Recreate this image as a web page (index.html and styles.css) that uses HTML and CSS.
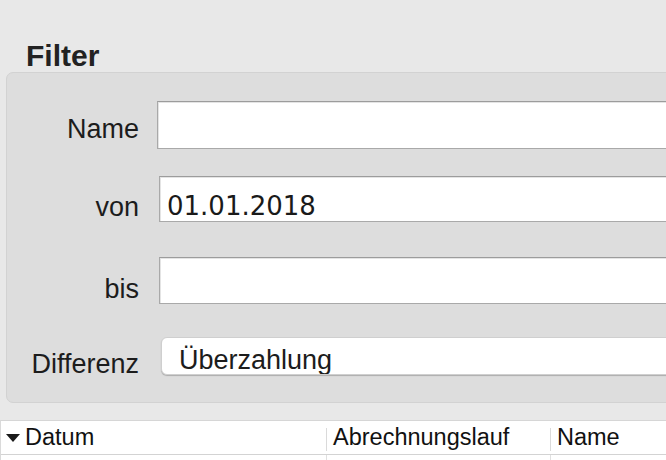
FILE: index.html
```html
<!DOCTYPE html>
<html lang="de">
<head>
<meta charset="utf-8">
<title>Filter</title>
<link rel="stylesheet" href="styles.css">
</head>
<body>
<div class="page">
  <h1 class="title">Filter</h1>
  <section class="group">
    <div class="row row-name">
      <label class="label">Name</label>
      <div class="field"></div>
    </div>
    <div class="row row-von">
      <label class="label">von</label>
      <div class="field field-date">01.01.2018</div>
    </div>
    <div class="row row-bis">
      <label class="label">bis</label>
      <div class="field field-date"></div>
    </div>
    <div class="row row-diff">
      <label class="label">Differenz</label>
      <div class="popup">Überzahlung</div>
    </div>
  </section>
  <div class="table">
    <div class="thead">
      <div class="th th-date"><span class="sort"></span>Datum</div>
      <div class="th th-run"><span class="sep"></span>Abrechnungslauf</div>
      <div class="th th-name"><span class="sep"></span>Name</div>
    </div>
    <div class="tbody">
      <div class="td td-date"></div>
      <div class="td td-run"></div>
      <div class="td td-name"></div>
    </div>
  </div>
</div>
</body>
</html>
```
FILE: styles.css
```css
html, body {
  margin: 0;
  padding: 0;
}
body {
  background: #e8e8e8;
  width: 666px;
  height: 460px;
  overflow: hidden;
  font-family: "Liberation Sans", Arial, sans-serif;
  color: #1e1e1e;
}
.page {
  display: flex;
  flex-direction: column;
  padding-top: 40px;
}
.title {
  margin: 0;
  padding-left: 26px;
  font-size: 30px;
  line-height: 32px;
  font-weight: bold;
  color: #222;
}
.group {
  margin-left: 6px;
  margin-right: -30px;
  background: #dddddd;
  border: 1px solid #d2d2d2;
  border-radius: 7px;
  padding: 28px 0 27px 0;
  display: flex;
  flex-direction: column;
}
.row {
  display: grid;
  grid-template-columns: 132px 1fr;
  column-gap: 18px;
  align-items: end;
}
.label {
  font-size: 27px;
  line-height: 30px;
  text-align: right;
  color: #1c1c1c;
}
.field {
  background: #fff;
  border: 1px solid #a9a9a9;
  border-top-color: #9c9c9c;
  box-shadow: inset 1px 1px 0 #e4e4e4;
  height: 46px;
  box-sizing: border-box;
  font-family: "DejaVu Sans", sans-serif;
  font-size: 26px;
  line-height: 30px;
  padding-left: 7px;
  color: #1a1a1a;
}
.row-name .field { height: 48px; }
.row-name .label { margin-bottom: 5px; }
.row-von { margin-top: 27px; }
.row-von .field { height: 46px; margin-left: 2px; padding-top: 14px; }
.row-von .label { margin-bottom: 0; }
.row-bis { margin-top: 35px; }
.row-bis .field { height: 47px; margin-left: 2px; }
.row-bis .label { margin-bottom: 0; }
.row-diff { margin-top: 33px; }
.row-diff .label { margin-bottom: -4px; }
.popup {
  margin-left: 4px;
  height: 38px;
  box-sizing: border-box;
  background: #fff;
  border: 1px solid #cfcfcf;
  border-radius: 6px;
  box-shadow: 0 1px 1px rgba(0,0,0,0.22);
  font-size: 27px;
  line-height: 44px;
  padding-left: 17px;
  overflow: hidden;
  color: #1c1c1c;
}
.table {
  margin-top: 17px;
  background: #fff;
  border-top: 1px solid #d6d6d6;
  border-left: 1px solid #dadada;
  margin-right: -10px;
}
.thead {
  display: grid;
  grid-template-columns: 325px 224px 1fr;
  height: 33px;
  border-bottom: 1px solid #d3d3d3;
}
.th {
  display: flex;
  align-items: center;
  font-size: 23.5px;
  line-height: 33px;
  color: #111;
}
.th-date { padding-left: 5px; }
.sort {
  width: 0;
  height: 0;
  border-left: 7px solid transparent;
  border-right: 7px solid transparent;
  border-top: 8px solid #1a1a1a;
  margin-right: 5px;
  margin-top: 1px;
}
.sep {
  width: 1px;
  height: 23px;
  background: #dadada;
  margin-right: 6px;
  align-self: center;
  margin-top: 3px;
}
.tbody {
  display: grid;
  grid-template-columns: 325px 224px 1fr;
  height: 20px;
}
.td-run, .td-name {
  border-left: 1px solid #e0e0e0;
}
```
